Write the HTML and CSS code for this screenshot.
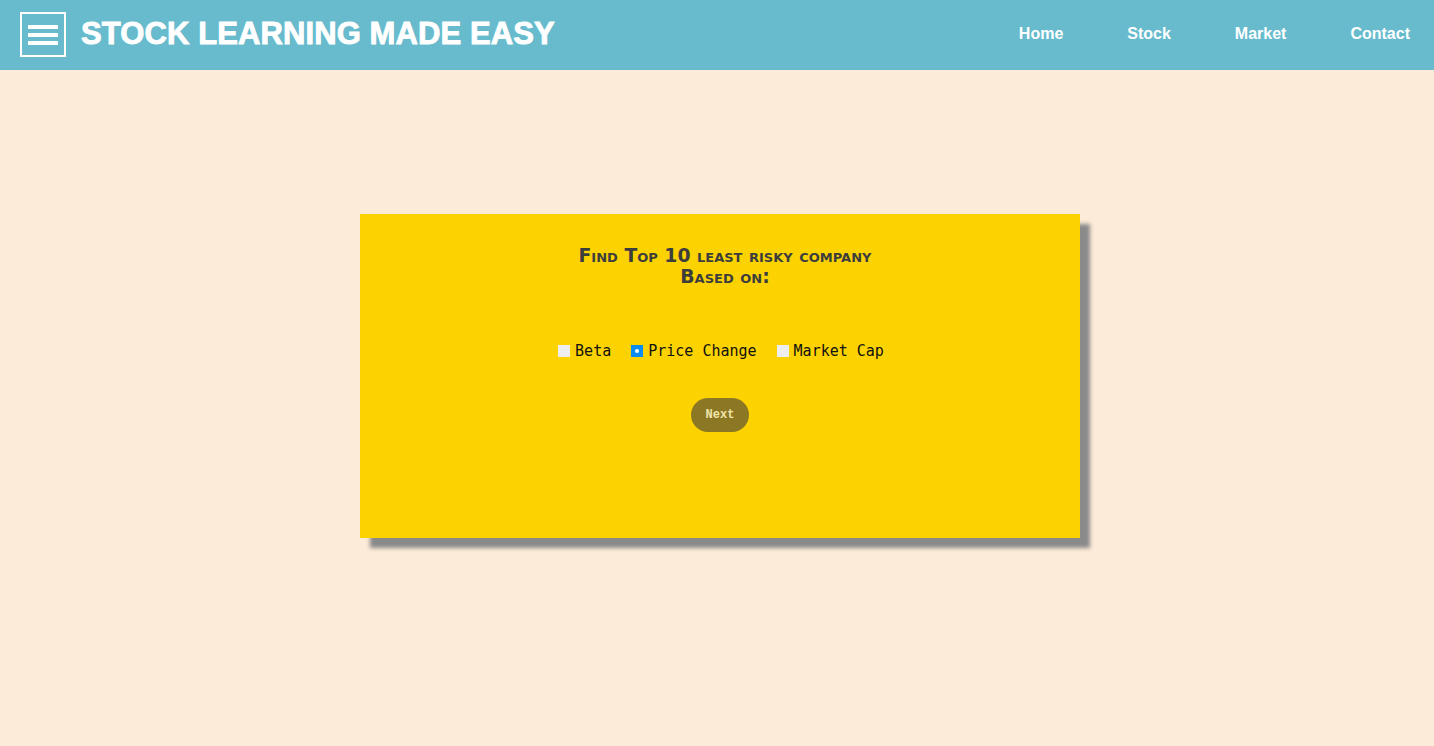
FILE: index.html
```html
<!DOCTYPE html>
<html>
<head>
<meta charset="utf-8">
<link rel="stylesheet" href="styles.css">
</head>
<body>
<header class="topbar">
  <div class="brand">
    <div class="burger"><span></span><span></span><span></span></div>
    <h1 class="title">STOCK LEARNING MADE EASY</h1>
  </div>
  <nav class="nav">
    <a href="#">Home</a>
    <a href="#">Stock</a>
    <a href="#">Market</a>
    <a href="#">Contact</a>
  </nav>
</header>
<main class="main">
  <section class="card">
    <h2 class="heading">Find Top 10 least risky company<br>Based on:</h2>
    <div class="options">
      <label class="opt"><span class="box"></span>Beta</label>
      <label class="opt"><span class="box checked"></span>Price Change</label>
      <label class="opt"><span class="box"></span>Market Cap</label>
    </div>
    <button class="next">Next</button>
  </section>
</main>
</body>
</html>
```
FILE: styles.css
```css
html, body { margin: 0; padding: 0; }
body { background: #fcebd8; height: 746px; overflow: hidden; font-family: "Liberation Sans", Arial, sans-serif; }
.topbar { height: 70px; background: #67bbcd; display: flex; align-items: center; justify-content: space-between; padding: 0 24px 0 20px; box-sizing: border-box; }
.brand { display: flex; align-items: center; gap: 15px; }
.burger { height: 41px; border: 2px solid #fff; display: flex; flex-direction: column; justify-content: center; gap: 4px; padding: 0 6px; box-sizing: content-box; width: 30px; margin-top: -1px; }
.burger span { display: block; height: 4px; background: #fff; }
.title { margin: 0 0 2px; color: #fff; font-size: 31px; font-weight: 900; letter-spacing: 0.1px; -webkit-text-stroke: 0.9px #fff; }
.nav { display: flex; gap: 64px; margin-top: -2px; }
.nav a { color: #fff; text-decoration: none; font-weight: bold; font-size: 16px; }
.main { display: flex; justify-content: center; padding-top: 144px; padding-left: 6px; }
.card { width: 720px; height: 324px; background: #fcd300; box-shadow: 10px 10px 4px #8a8a8a; box-sizing: border-box; padding-top: 31px; display: flex; flex-direction: column; align-items: center; }
.heading { margin: 0; padding-left: 10px; font-family: "DejaVu Sans", Verdana, sans-serif; font-variant: small-caps; font-weight: bold; font-size: 18.8px; line-height: 21px; color: #3d3d3d; text-align: center; }
.options { display: flex; gap: 20px; margin-top: 55px; margin-left: 2px; font-family: "DejaVu Sans Mono", monospace; font-size: 15px; color: #111; }
.opt { display: flex; align-items: center; gap: 5px; }
.box { width: 12px; height: 12px; background: #eeeeee; display: inline-flex; align-items: center; justify-content: center; }
.box.checked { background: #0a8cf0; }
.box.checked::after { content: ""; width: 4px; height: 4px; border-radius: 50%; background: #fff; }
.next { margin-top: 38px; width: 58px; height: 34px; border: none; border-radius: 17px; background: #8b7724; color: #f0e4a8; font-family: "Liberation Mono", monospace; font-weight: bold; font-size: 12px; padding: 0; }
```
